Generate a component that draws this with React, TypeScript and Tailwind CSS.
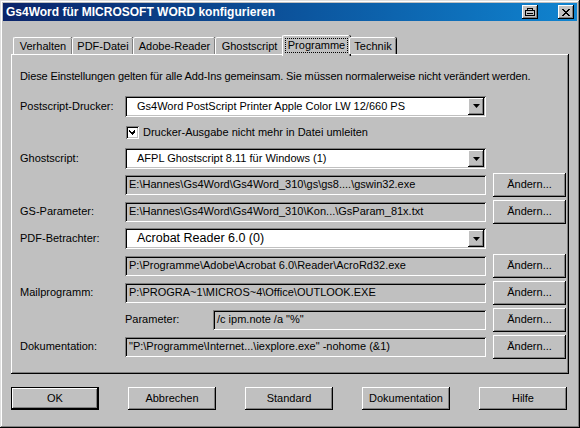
import React from "react";

const raised = "shadow-[inset_-1px_-1px_0_#000,inset_1px_1px_0_#fff,inset_-2px_-2px_0_#808080]";
const sunken = "shadow-[inset_1px_1px_0_#808080,inset_-1px_-1px_0_#fff,inset_2px_2px_0_#000,inset_-2px_-2px_0_#c0c0c0]";

function Button({ label, wide, isDefault }: { label: string; wide?: boolean; isDefault?: boolean }) {
  const size = wide ? "w-[88px] h-[23px]" : "w-[73px] h-[24px]";
  if (isDefault) {
    return (
      <div className={`${size} border border-black bg-[#c0c0c0]`}>
        <div className={`w-full h-full flex items-center justify-center ${raised}`}>{label}</div>
      </div>
    );
  }
  return <div className={`${size} bg-[#c0c0c0] flex items-center justify-center ${raised}`}>{label}</div>;
}

function Combo({ value, big }: { value: string; big?: boolean }) {
  return (
    <div className={`w-[361px] h-[21px] bg-white flex items-center pl-[12px] pr-[2px] ${sunken}`}>
      <span className={`flex-1 ${big ? "text-[12.5px]" : ""}`}>{value}</span>
      <div className={`w-[16px] h-[17px] bg-[#c0c0c0] flex items-center justify-center ${raised}`}>
        <svg width="7" height="4" viewBox="0 0 7 4">
          <polygon points="0,0 7,0 3.5,4" fill="#000" />
        </svg>
      </div>
    </div>
  );
}

function Field({ value, width = "w-[361px]" }: { value: string; width?: string }) {
  return (
    <div className={`${width} h-[20px] bg-[#c0c0c0] flex items-center pl-[4px] whitespace-nowrap overflow-hidden ${sunken}`}>
      {value}
    </div>
  );
}

function Row({ label, children, button, h = "h-[27px]" }: { label?: string; children: React.ReactNode; button?: boolean; h?: string }) {
  return (
    <div className={`flex items-center ${h}`}>
      <div className="w-[105px]">{label}</div>
      {children}
      {button && (
        <div className="ml-[7px]">
          <Button label="Ändern..." />
        </div>
      )}
    </div>
  );
}

const tabs = ["Verhalten", "PDF-Datei", "Adobe-Reader", "Ghostscript", "Programme", "Technik"];
const tabWidths = ["w-[59px]", "w-[61px]", "w-[82px]", "w-[68px]", "w-[68px]", "w-[47px]"];

export default function App() {
  return (
    <div className="w-[580px] h-[428px] bg-[#c0c0c0] p-[3px] text-[11px] text-black font-['Liberation_Sans',Arial,sans-serif] shadow-[inset_-1px_-1px_0_#000,inset_1px_1px_0_#dfdfdf,inset_-2px_-2px_0_#808080,inset_2px_2px_0_#fff] overflow-hidden">
      {/* title bar */}
      <div className="h-[18px] flex items-center bg-gradient-to-r from-[#0a246a] to-[#1084d0] pl-[3px] pr-[3px]">
        <span className="flex-1 text-white font-bold text-[12px]">Gs4Word für MICROSOFT WORD konfigurieren</span>
        <div className={`w-[16px] h-[14px] bg-[#c0c0c0] flex items-center justify-center ${raised}`}>
          <svg width="10" height="8" viewBox="0 0 10 8" shapeRendering="crispEdges">
            <rect x="2.5" y="0.5" width="5" height="2" fill="none" stroke="#000" />
            <rect x="0.5" y="2.5" width="9" height="5" fill="none" stroke="#000" />
            <rect x="2" y="5" width="6" height="1" fill="#000" />
          </svg>
        </div>
        <div className={`ml-[20px] w-[16px] h-[14px] bg-[#c0c0c0] flex items-center justify-center ${raised}`}>
          <svg width="8" height="7" viewBox="0 0 8 7" shapeRendering="crispEdges">
            <path d="M0 0h2v1h-2zM6 0h2v1h-2zM1 1h2v1h-2zM5 1h2v1h-2zM2 2h4v1h-4zM3 3h2v1h-2zM2 4h4v1h-4zM1 5h2v1h-2zM5 5h2v1h-2zM0 6h2v1h-2zM6 6h2v1h-2z" fill="#000" />
          </svg>
        </div>
      </div>

      <div className="px-[8px] pt-[14px]">
        {/* tabs */}
        <div className="flex items-end h-[19px] pl-[2px] relative z-10">
          {tabs.map((t, i) => {
            const active = t === "Programme";
            return (
              <div
                key={t}
                className={`${tabWidths[i]} flex items-center justify-center bg-[#c0c0c0] rounded-t-[2px] border-t border-l border-white shadow-[inset_-1px_0_0_#808080,1px_0_0_#000] ${
                  active ? "h-[21px] -mb-[2px] pb-[2px] -mx-[1px]" : "h-[17px]"
                }`}
              >
                {active ? (
                  <span className="outline outline-1 outline-dotted outline-black px-[2px] leading-[13px]">{t}</span>
                ) : (
                  t
                )}
              </div>
            );
          })}
        </div>

        {/* panel */}
        <div className="h-[320px] pl-[9px] pt-[15px] shadow-[inset_-1px_-1px_0_#000,inset_1px_1px_0_#fff,inset_-2px_-2px_0_#808080]">
          <div className="h-[14px] leading-[14px] tracking-[-0.12px]">
            Diese Einstellungen gelten für alle Add-Ins gemeinsam. Sie müssen normalerweise nicht verändert werden.
          </div>
          <div className="mt-[10px]">
            <Row label="Postscript-Drucker:" h="h-[26px]">
              <Combo value="Gs4Word PostScript Printer Apple Color LW 12/660 PS" />
            </Row>
            <Row h="h-[27px]">
              <div className="flex items-center gap-[4px] ml-[1px]">
                <div className={`w-[13px] h-[13px] bg-white flex items-center justify-center ${sunken}`}>
                  <svg width="7" height="7" viewBox="0 0 7 7" shapeRendering="crispEdges">
                    <path d="M6 0v3l-3 3-3-3v-2l3 3z" fill="#000" />
                  </svg>
                </div>
                <span>Drucker-Ausgabe nicht mehr in Datei umleiten</span>
              </div>
            </Row>
            <Row label="Ghostscript:" h="h-[25px]">
              <Combo value="AFPL Ghostscript 8.11 für Windows (1)" />
            </Row>
            <Row button>
              <Field value="E:\Hannes\Gs4Word\Gs4Word_310\gs\gs8....\gswin32.exe" />
            </Row>
            <Row label="GS-Parameter:" button>
              <Field value="E:\Hannes\Gs4Word\Gs4Word_310\Kon...\GsParam_81x.txt" />
            </Row>
            <Row label="PDF-Betrachter:">
              <Combo value="Acrobat Reader 6.0 (0)" big />
            </Row>
            <Row button>
              <Field value="P:\Programme\Adobe\Acrobat 6.0\Reader\AcroRd32.exe" />
            </Row>
            <Row label="Mailprogramm:" button>
              <Field value="P:\PROGRA~1\MICROS~4\Office\OUTLOOK.EXE" />
            </Row>
            <Row button>
              <div className="flex items-center">
                <div className="w-[88px]">Parameter:</div>
                <Field value='/c ipm.note /a "%"' width="w-[273px]" />
              </div>
            </Row>
            <Row label="Dokumentation:" button>
              <Field value={'"P:\\Programme\\Internet...\\iexplore.exe" -nohome (&1)'} />
            </Row>
          </div>
        </div>

        {/* bottom buttons */}
        <div className="mt-[13px] flex justify-between w-[556px]">
          <Button label="OK" wide isDefault />
          <Button label="Abbrechen" wide />
          <Button label="Standard" wide />
          <Button label="Dokumentation" wide />
          <Button label="Hilfe" wide />
        </div>
      </div>
    </div>
  );
}
